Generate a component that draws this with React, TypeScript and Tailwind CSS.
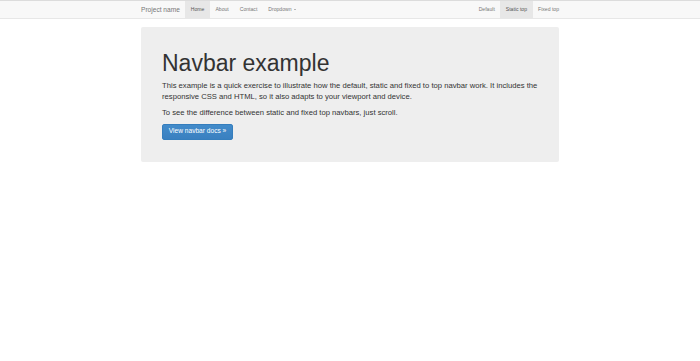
import React from "react";

export default function App() {
  const font = { fontFamily: '"Liberation Sans", Arial, sans-serif' };
  return (
    <div className="min-h-[361px] w-full bg-white" style={font}>
      <nav className="h-[19px] border-t border-b border-t-[#dcdcdc] border-b-[#e7e7e7] bg-[#f8f8f8]">
        <div className="mx-auto flex h-full w-[418px] items-stretch">
          <div className="-ml-[5.5px] flex items-center px-[5.5px] text-[6.6px] text-[#777]">Project name</div>
          <ul className="flex items-stretch text-[5.1px] text-[#777]">
            <li className="flex items-center bg-[#e7e7e7] px-[5.5px] text-[#555]">Home</li>
            <li className="flex items-center px-[5.5px]">About</li>
            <li className="flex items-center px-[5.5px]">Contact</li>
            <li className="flex items-center gap-[2px] px-[5.5px]">
              Dropdown
              <span className="inline-block h-0 w-0 border-l-[1.5px] border-r-[1.5px] border-t-[1.5px] border-l-transparent border-r-transparent border-t-[#777]" />
            </li>
          </ul>
          <ul className="-mr-[5.5px] ml-auto flex items-stretch text-[5.1px] text-[#777]">
            <li className="flex items-center px-[5.5px]">Default</li>
            <li className="flex items-center bg-[#e7e7e7] px-[5.5px] text-[#555]">Static top</li>
            <li className="flex items-center px-[5.5px]">Fixed top</li>
          </ul>
        </div>
      </nav>
      <div className="mx-auto mt-[8px] w-[418px]">
        <div className="rounded-[2px] bg-[#eeeeee] px-[21px] pb-[22px] pt-[17px] text-[#333]">
          <h1 className="mb-[3.6px] mt-[7px] text-[23px] leading-[25px] text-[#333]">Navbar example</h1>
          <p className="mb-[5.5px] text-[7.66px] leading-[11px]">
            This example is a quick exercise to illustrate how the default, static and fixed to top navbar work. It includes the responsive CSS and HTML, so it also adapts to your viewport and device.
          </p>
          <p className="mb-[5.5px] text-[7.66px] leading-[11px]">
            To see the difference between static and fixed top navbars, just scroll.
          </p>
          <div className="flex">
            <span className="inline-flex h-[16px] items-center rounded-[2px] border border-[#357ebd] bg-gradient-to-b from-[#428bca] to-[#3a80c0] px-[5.8px] text-[6.6px] leading-none text-white">
              View navbar docs »
            </span>
          </div>
        </div>
      </div>
    </div>
  );
}
